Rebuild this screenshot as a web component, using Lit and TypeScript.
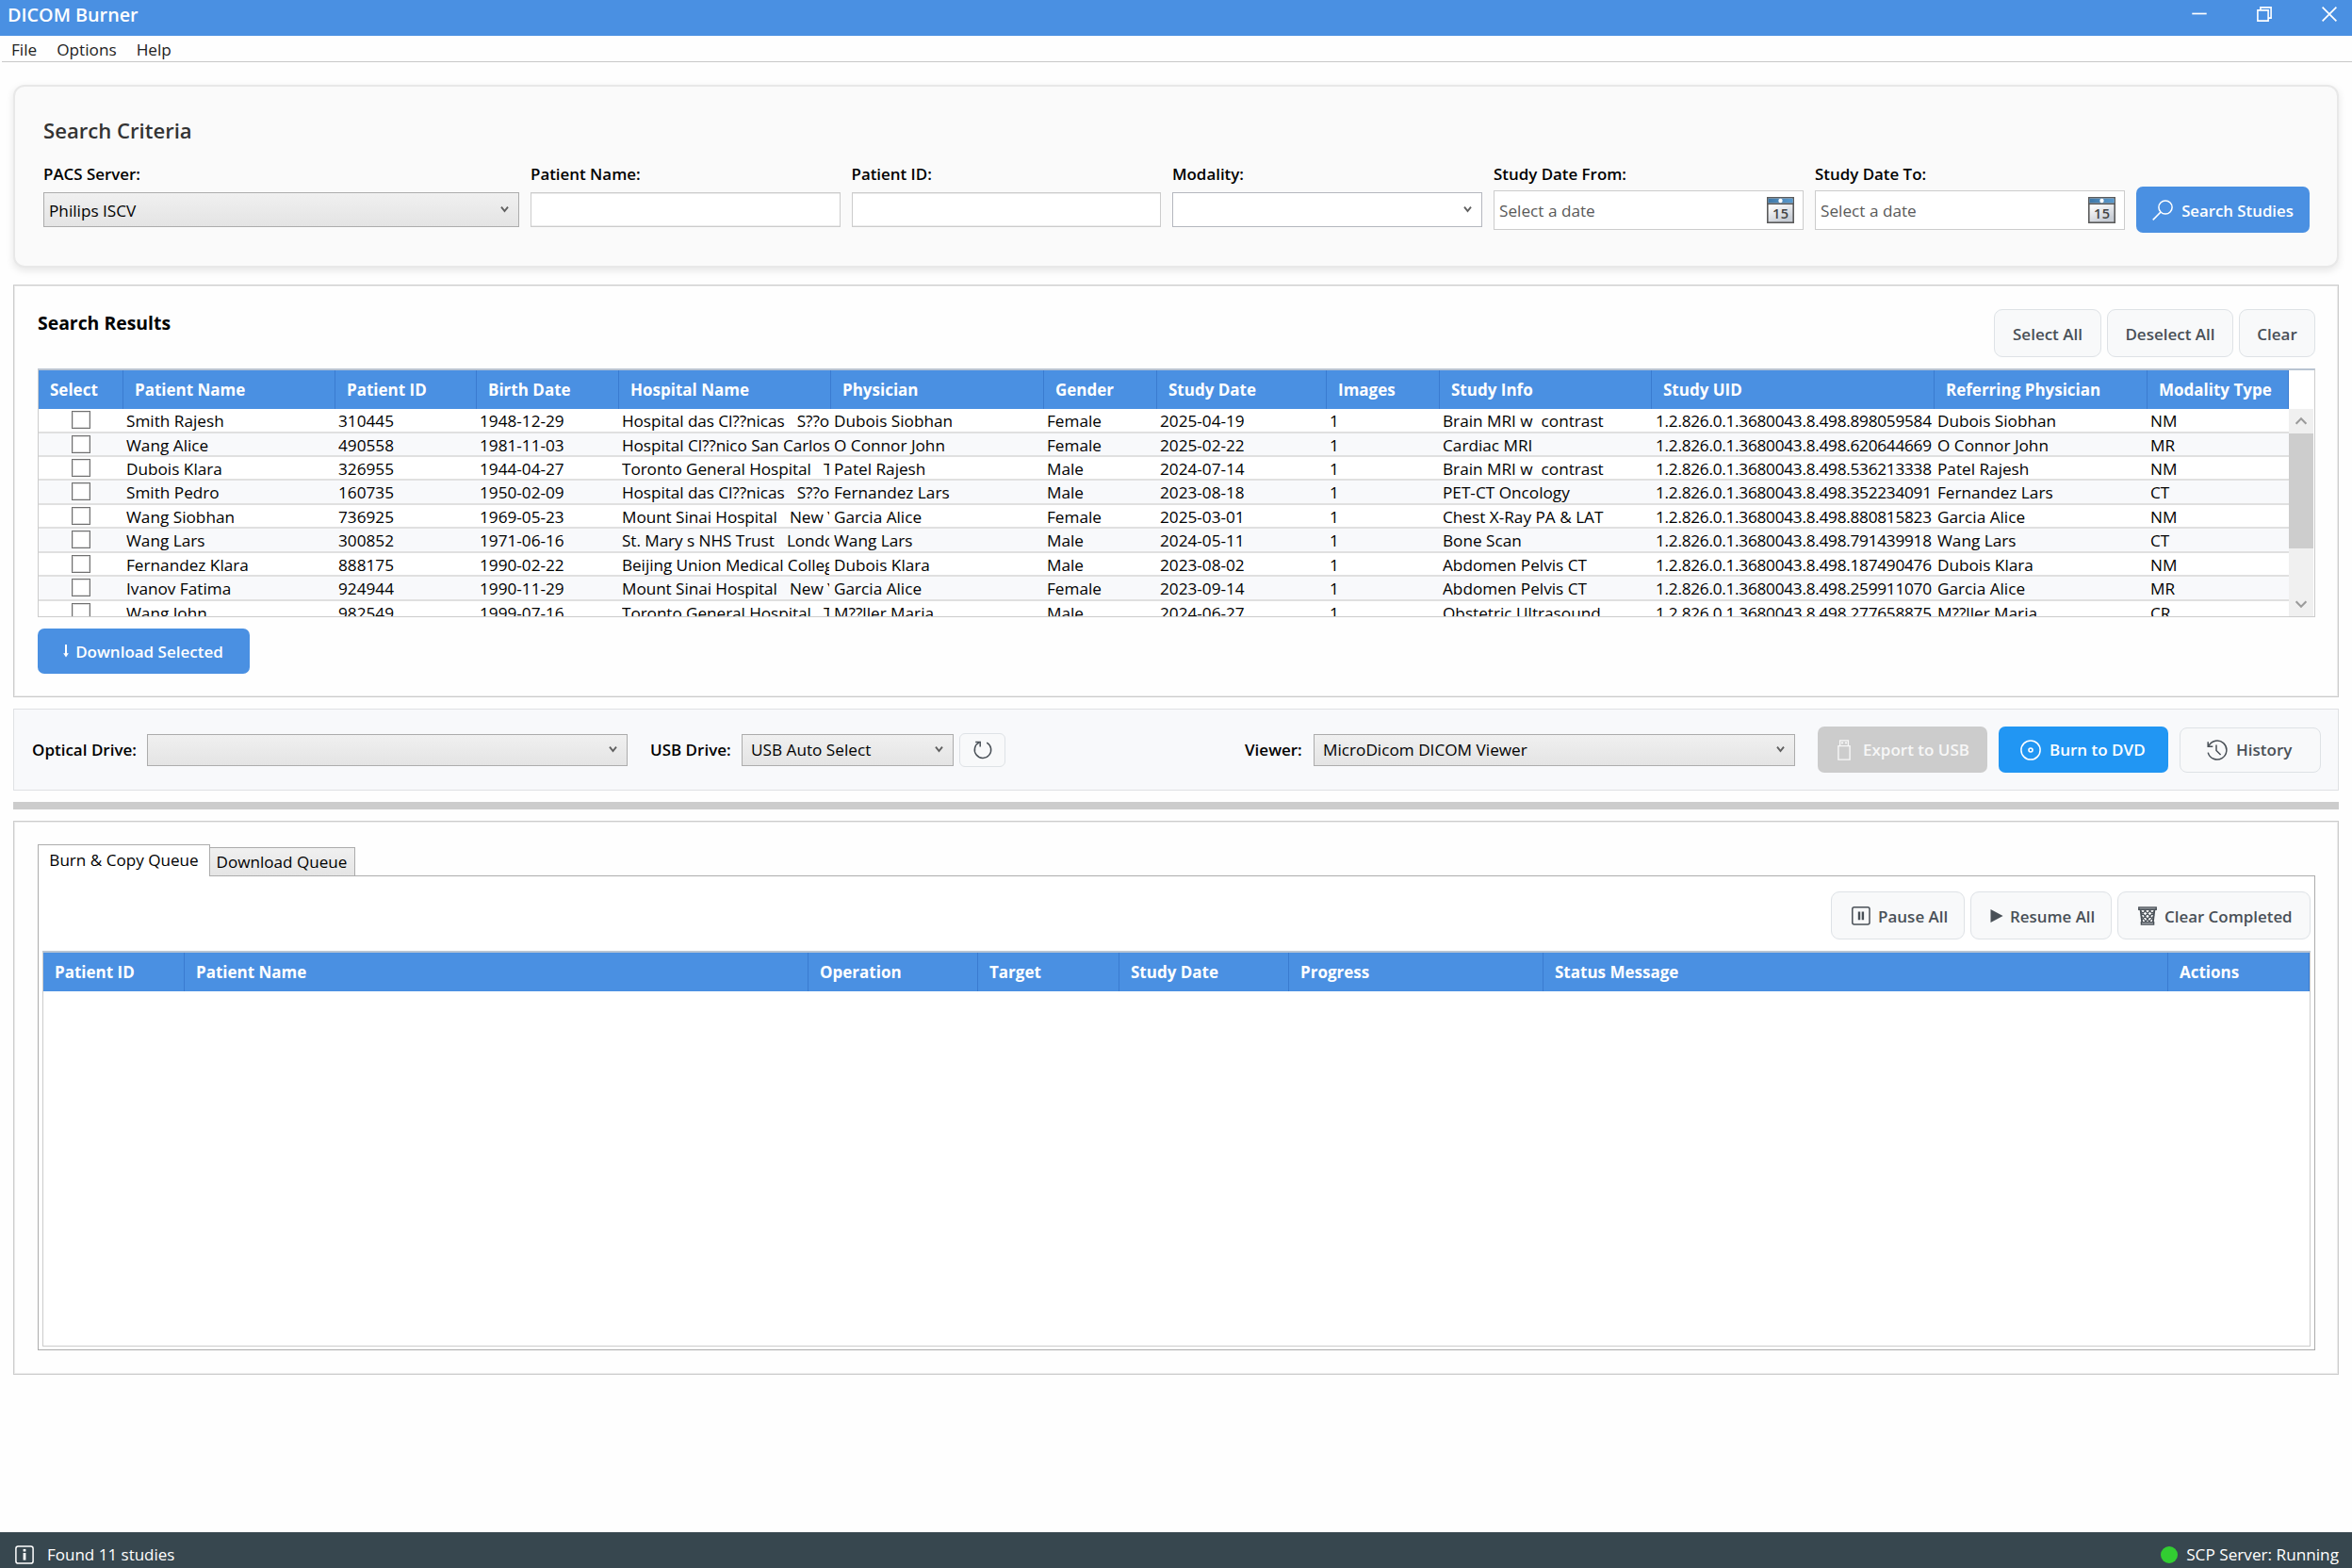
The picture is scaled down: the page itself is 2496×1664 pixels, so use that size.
import { LitElement, html, css, svg } from "lit";
import { customElement, property } from "lit/decorators.js";

interface Study {
  name: string; id: string; birth: string; hospital: string; physician: string; gender: string;
  date: string; images: string; info: string; uid: string; modality: string;
}

const study = (
  name: string, id: string, birth: string, hospital: string, physician: string, gender: string,
  date: string, info: string, uid: string, modality: string,
): Study => ({ name, id, birth, hospital, physician, gender, date, images: "1", info, uid: "1.2.826.0.1.3680043.8.498." + uid, modality });

const STUDIES: Study[] = [
  study("Smith Rajesh", "310445", "1948-12-29", "Hospital das Cl??nicas   S??o Paulo", "Dubois Siobhan", "Female", "2025-04-19", "Brain MRI w  contrast", "8980595842", "NM"),
  study("Wang Alice", "490558", "1981-11-03", "Hospital Cl??nico San Carlos", "O Connor John", "Female", "2025-02-22", "Cardiac MRI", "6206446690", "MR"),
  study("Dubois Klara", "326955", "1944-04-27", "Toronto General Hospital   Toronto", "Patel Rajesh", "Male", "2024-07-14", "Brain MRI w  contrast", "5362133389", "NM"),
  study("Smith Pedro", "160735", "1950-02-09", "Hospital das Cl??nicas   S??o Paulo", "Fernandez Lars", "Male", "2023-08-18", "PET-CT Oncology", "3522340919", "CT"),
  study("Wang Siobhan", "736925", "1969-05-23", "Mount Sinai Hospital   New York", "Garcia Alice", "Female", "2025-03-01", "Chest X-Ray PA & LAT", "8808158230", "NM"),
  study("Wang Lars", "300852", "1971-06-16", "St. Mary s NHS Trust   London", "Wang Lars", "Male", "2024-05-11", "Bone Scan", "7914399182", "CT"),
  study("Fernandez Klara", "888175", "1990-02-22", "Beijing Union Medical College", "Dubois Klara", "Male", "2023-08-02", "Abdomen Pelvis CT", "1874904767", "NM"),
  study("Ivanov Fatima", "924944", "1990-11-29", "Mount Sinai Hospital   New York", "Garcia Alice", "Female", "2023-09-14", "Abdomen Pelvis CT", "2599110704", "MR"),
  study("Wang John", "982549", "1999-07-16", "Toronto General Hospital   Toronto", "M??ller Maria", "Male", "2024-06-27", "Obstetric Ultrasound", "2776588752", "CR"),
];

const RESULT_COLUMNS = [
  "Select", "Patient Name", "Patient ID", "Birth Date", "Hospital Name", "Physician", "Gender",
  "Study Date", "Images", "Study Info", "Study UID", "Referring Physician", "Modality Type",
];
const QUEUE_COLUMNS = ["Patient ID", "Patient Name", "Operation", "Target", "Study Date", "Progress", "Status Message", "Actions"];

const FONT = css`
  * { box-sizing: border-box; }
  :host { font-family: "Open Sans", "Noto Sans", sans-serif; font-size: 17.2px; color: #000; }
  svg { display: block; flex: none; fill: none; stroke: currentColor; }
`;

const icon = (w: number, h: number, body: unknown) =>
  html`<svg width=${w} height=${h} viewBox="0 0 ${w} ${h}">${body}</svg>`;

const ICONS = {
  minimize: icon(16, 16, svg`<path d="M0.3 7.5H15.7" stroke-width="1.7"/>`),
  restore: icon(16, 16, svg`<path d="M0.9 3.9H12.1V15.1H0.9Z M3.9 3.6V0.9H15.1V12.1H12.4" stroke-width="1.6"/>`),
  close: icon(16, 16, svg`<path d="M0.6 0.6L15.4 15.4M15.4 0.6L0.6 15.4" stroke-width="1.7"/>`),
  search: icon(22, 22, svg`<circle cx="14" cy="8" r="7.1" stroke-width="1.5"/><path d="M8.9 13.1L0.7 21.4" stroke-width="1.5"/>`),
  down: icon(6, 14, svg`<path d="M3 0V11" stroke-width="2"/><path d="M0.2 9.2H5.8L3 13.6Z" fill="currentColor" stroke="none"/>`),
  refresh: icon(22, 22, svg`<path d="M15.2 3.1A8.7 8.7 0 1 1 7.2 2.9" stroke-width="1.5"/><path d="M3.2 2.5H8.2V7.5" stroke-width="1.5"/>`),
  usb: icon(14, 22, svg`<path d="M0.9 6.6H13.1V21.1H0.9Z" stroke-width="1.4"/><path d="M2.6 6V0.8H11.4V6" stroke-width="1.3"/><path d="M4 3.4H6.1M7.9 3.4H10" stroke-width="1.7"/>`),
  disc: icon(22, 22, svg`<circle cx="11" cy="11" r="10.1" stroke-width="1.5"/><circle cx="11" cy="11" r="2" stroke-width="1.6"/>`),
  history: icon(22, 22, svg`<path d="M1.9 6.6A10 10 0 1 1 1.2 13.6" stroke-width="1.5"/><path d="M1.2 2.2V7.3H6.3" stroke-width="1.5"/><path d="M10 5.6V11.5L14.6 16" stroke-width="1.5"/>`),
  pause: icon(20, 20, svg`<rect x="0.8" y="0.8" width="18.2" height="18.2" rx="2" stroke-width="1.5"/><path d="M8 5.6V14.3M11.9 5.6V14.3" stroke-width="2.4"/>`),
  play: icon(14, 14, svg`<path d="M0.5 0L13.6 7L0.5 14Z" fill="currentColor" stroke="none"/>`),
  trash: icon(20, 20, svg`<path d="M0.8 0.9H19.2V3.3H0.8Z" stroke-width="1.4" fill="#a9adb2"/><path d="M2.6 3.6L4.2 16.6M17.4 3.6L15.8 16.6" stroke-width="1.8"/><path d="M3.2 5.2L12.5 16.5M6.5 3.6L16 14.2M11.5 3.6L17 9.6M3.8 10.5L8.6 16.5M16.8 5.2L7.5 16.5M13.5 3.6L4 14.2M8.5 3.6L3 9.6M16.2 10.5L11.4 16.5" stroke-width="1.2"/><path d="M3.4 16.6H16.6V19.1H3.4Z" stroke-width="1.4" fill="#a9adb2"/>`),
  info: icon(20, 20, svg`<rect x="0.9" y="0.9" width="18.2" height="18.2" rx="2.4" stroke-width="1.5"/><path d="M10 8V15.6" stroke-width="2.8"/><path d="M10 3.9V6.5" stroke-width="2.8"/>`),
  chevron: icon(9, 8, svg`<path d="M1 0.6L4.5 5L8 0.6" stroke-width="1.9"/>`),
  scrollUp: icon(14, 10, svg`<path d="M1.6 7.8L7 2.2L12.4 7.8" stroke-width="2"/>`),
  scrollDown: icon(14, 10, svg`<path d="M1.6 2.2L7 7.8L12.4 2.2" stroke-width="2"/>`),
  calendar: html`<svg width="29" height="28" viewBox="0 0 29 28">
    <defs>
      <linearGradient id="sky" x1="0" x2="1" y1="0" y2="0"><stop offset="0" stop-color="#3f78a8"/><stop offset="1" stop-color="#5a9bd0"/></linearGradient>
      <linearGradient id="page" x1="0" x2="0.4" y1="0" y2="1"><stop offset="0.3" stop-color="#fff"/><stop offset="1" stop-color="#c9ced6"/></linearGradient>
    </defs>
    <rect x="0.8" y="0.8" width="27.4" height="26.4" fill="url(#page)" stroke="#5b5b5b" stroke-width="1.6"/>
    <rect x="1.4" y="1.6" width="26.2" height="5" fill="url(#sky)" stroke="none"/>
    <path d="M0.5 7.3H28.5" stroke="#555" stroke-width="1.5"/>
    <circle cx="14.5" cy="4" r="2.2" fill="#fff" stroke="none"/>
    <text class="day" x="14.8" y="22.8">15</text>
  </svg>`,
};

@customElement("combo-box")
class ComboBox extends LitElement {
  @property() value = "";
  @property({ type: Boolean, reflect: true }) editable = false;
  static styles = [FONT, css`
    :host { display: flex; align-items: center; justify-content: space-between; box-sizing: border-box;
      height: 34px; flex: none; padding: 0 10px 0 9px; border: 1px solid #acacac;
      background: linear-gradient(#f0f0f0, #e4e4e4); }
    :host([editable]) { background: #fff; border-color: #b4b7be; }
    svg { color: #606060; }
  `];
  render() { return html`<span>${this.value}</span>${ICONS.chevron}`; }
}

@customElement("data-header")
class DataHeader extends LitElement {
  @property({ attribute: false }) columns: string[] = [];
  static styles = [FONT, css`
    :host { display: grid; height: 41px; background: #4a90e2; }
    .cell { display: flex; align-items: center; padding-left: 12px; color: #fff; font-weight: 700; font-size: 17px;
      white-space: nowrap; border-right: 1px solid #3a7bd0; }
  `];
  render() { return this.columns.map((c) => html`<div class="cell">${c}</div>`); }
}

@customElement("app-root")
class AppRoot extends LitElement {
  static styles = [FONT, css`
    :host { display: flex; flex-direction: column; width: 2496px; height: 1664px; background: #fefefe; overflow: hidden; }

    .titlebar { display: flex; justify-content: space-between; height: 38px; padding: 0 16px 0 8px; background: #4a90e2; color: #fff; flex: none; }
    .title { line-height: 31px; font-size: 19.8px; font-weight: 600; }
    .window-buttons { display: flex; align-items: center; height: 29px; gap: 53px; }
    .menubar { display: flex; gap: 21px; height: 28px; margin-left: 2px; padding-left: 10px; line-height: 29px; border-bottom: 1px solid #c8c8c8; color: #212121; flex: none; }

    .content { flex: 1; display: flex; flex-direction: column; padding: 24px 14px 0; }
    .label { font-weight: 600; font-size: 17px; white-space: nowrap; }

    .criteria { height: 194px; margin-bottom: 18px; padding: 32px 29px 0 30px; border: 2px solid #e8e8e8; border-radius: 12px; background: #fafafa;
      box-shadow: 0 3px 9px rgba(0, 0, 0, 0.1); flex: none; }
    .criteria-title { line-height: 28px; margin-bottom: 21px; font-size: 22.1px; font-weight: 600; color: #333; }
    .fields { display: grid; grid-template-columns: 505px 328.5px 328.5px 329px 329px 329px 184px; column-gap: 12px; }
    .field .label { line-height: 24px; margin-bottom: 1px; font-size: 16.9px; }
    .slot { display: flex; align-items: center; height: 49px; }
    .slot combo-box { flex: 1; height: 37px; padding-left: 5px; padding-top: 1px; }
    .input { flex: 1; height: 37px; border: 1px solid #ccc; background: #fff; box-shadow: inset 0 1px #ececec, inset 0 -1px #ececec; }
    .date { flex: 1; display: flex; align-items: center; justify-content: space-between; height: 42px; padding: 1px 9px 0 5px;
      border: 1px solid #ccc; background: #fff; color: #595959; }
    .day { font: 600 14.5px "Open Sans", sans-serif; fill: #444; stroke: none; text-anchor: middle; letter-spacing: 0.6px; }

    .button { display: flex; align-items: center; justify-content: center; flex: none; border-radius: 8px; font-weight: 600; font-size: 17px; white-space: nowrap; }
    .primary { background: #4a90e2; color: #fff; border-radius: 7px; }
    .plain { background: #f8f9fa; color: #495057; border: 1px solid #dee2e6; border-radius: 9px; }
    .search { align-self: end; height: 49px; gap: 9px; font-size: 16.8px; padding-top: 1px; }

    .panel { border: 1px solid #ccc; background: #fefefe; box-shadow: inset 0 0 0 1px #ececec; flex: none; }
    .results { height: 438px; margin-bottom: 12px; padding: 25px 24px 0 25px; }
    .results-head { display: flex; justify-content: space-between; height: 51px; margin-bottom: 12px; }
    .results-title { line-height: 29px; font-size: 19.4px; font-weight: 700; }
    .group { display: flex; gap: 6px; }
    .group .button { height: 51px; padding-top: 1px; }
    .w114 { width: 114px; }
    .w134 { width: 134px; }
    .w81 { width: 81px; }

    .grid { border: 1px solid #ccc; border-top: 2px solid #b9c4d2; background: #fff; }
    .grid-results { height: 264px; overflow: hidden; }
    .cols { display: grid; width: 2388px; grid-template-columns: 90px 225px 150px 151px 225px 226px 120px 180px 120px 225px 300px 226px 150px; }
    .grid-body { display: flex; height: 220px; }
    .rows { width: 2388px; overflow: hidden; }
    .row { height: 25px; border-bottom: 2px solid #e0e0e0; }
    .row:nth-child(1), .row:nth-child(4), .row:nth-child(6), .row:nth-child(8) { height: 26px; }
    .row:nth-child(even) { background: #f8f9fb; }
    .cell { line-height: 25px; height: 24px; margin: 0 3px; overflow: hidden; white-space: pre; }
    .hospital { letter-spacing: -0.07px; margin-right: 2px; }
    .uid { letter-spacing: -0.25px; margin-left: 4px; }
    .check { width: 20px; height: 19px; margin: 2px auto 0; border: 1px solid #707070; background: #fff; box-shadow: inset 0 0 0 1px #dcdcdc; }
    .scrollbar { display: flex; flex-direction: column; align-items: center; width: 26px; background: #f0f0f0; color: #9b9b9b; }
    .arrow { display: flex; align-items: center; justify-content: center; height: 26px; }
    .thumb { width: 26px; height: 122px; background: #cdcdcd; }
    .track { flex: 1; }
    .download { width: 225px; height: 48px; margin-top: 12px; gap: 7px; padding-right: 1px; }

    .toolbar { display: flex; align-items: center; height: 87px; margin-bottom: 12px; padding: 0 18px 0 19px; border: 1px solid #dfe1e4; background: #f8f9fb; flex: none; }
    .optical-label { width: 122px; }
    .optical { width: 510px; margin-right: 24px; }
    .usb-label { width: 97px; }
    .usb { width: 225px; margin-right: 6px; }
    .refresh { width: 49px; height: 36px; border-radius: 6px; }
    .spacer { flex: 1; }
    .viewer-label { width: 73px; }
    .viewer { width: 511px; margin-right: 24px; }
    .action { height: 49px; margin-right: 12px; justify-content: flex-start; border-radius: 7px; }
    .export { width: 180px; padding-left: 21px; gap: 13px; background: #ccc; color: #f7f7f7; }
    .burn { width: 180px; padding-left: 23px; gap: 9px; background: #2196f3; color: #fff; }
    .history { width: 150px; height: 48px; margin-right: 0; padding-left: 28px; gap: 9px; border-radius: 8px; }

    .splitter { height: 8px; margin-bottom: 12px; background: #ccc; flex: none; }

    .queue { height: 588px; padding: 24px 24px 0 25px; }
    .tabs { display: flex; align-items: flex-end; height: 33px; }
    .tab { display: flex; align-items: center; justify-content: center; border: 1px solid #acacac; white-space: nowrap; font-size: 17.1px; }
    .tab-active { position: relative; width: 183px; height: 34px; margin-bottom: -1px; padding-bottom: 2px; border-bottom: none; background: #fff; }
    .tab-idle { width: 154px; height: 30px; padding-right: 1px; border-left: none; border-bottom: none; background: linear-gradient(#f0f0f0, #e5e5e5); }
    .tab-body { height: 504px; padding: 16px 4px 0; border: 1px solid #acacac; background: #fff; }
    .queue-tools { display: flex; justify-content: flex-end; margin-bottom: 12px; }
    .queue-tools .button { justify-content: flex-start; }
    .pause { width: 142px; padding-left: 21px; gap: 8px; }
    .resume { width: 150px; padding-left: 20px; gap: 7px; font-size: 16.9px; }
    .clear { width: 205px; padding-left: 21px; gap: 8px; font-size: 16.9px; }
    .grid-queue { height: 420px; }
    .queue-cols { grid-template-columns: 150px 662px 180px 150px 180px 270px 663px 1fr; }

    .status { display: flex; align-items: center; height: 38px; padding: 9px 14px 0 16px; background: #37474f; color: #fff; line-height: 30px; flex: none; }
    .status-text { margin-left: 14px; font-size: 17px; }
    .dot { width: 18px; height: 18px; margin-right: 9px; border-radius: 50%; background: #32cd32; }
  `];

  private field(label: string, control: unknown) {
    return html`<div class="field"><div class="label">${label}</div><div class="slot">${control}</div></div>`;
  }

  private row(s: Study) {
    const cell = (v: string) => html`<div class="cell">${v}</div>`;
    return html`<div class="row cols">
      <div class="check"></div>
      ${[s.name, s.id, s.birth].map(cell)}
      <div class="cell hospital">${s.hospital}</div>
      ${[s.physician, s.gender, s.date, s.images, s.info].map(cell)}
      <div class="cell uid">${s.uid}</div>
      ${cell(s.physician)}${cell(s.modality)}
    </div>`;
  }

  render() {
    const date = html`<div class="date"><span>Select a date</span>${ICONS.calendar}</div>`;
    return html`
      <div class="titlebar">
        <div class="title">DICOM Burner</div>
        <div class="window-buttons">${ICONS.minimize}${ICONS.restore}${ICONS.close}</div>
      </div>
      <div class="menubar"><span>File</span><span>Options</span><span>Help</span></div>

      <div class="content">
        <section class="criteria">
          <div class="criteria-title">Search Criteria</div>
          <div class="fields">
            ${this.field("PACS Server:", html`<combo-box value="Philips ISCV"></combo-box>`)}
            ${this.field("Patient Name:", html`<div class="input"></div>`)}
            ${this.field("Patient ID:", html`<div class="input"></div>`)}
            ${this.field("Modality:", html`<combo-box editable></combo-box>`)}
            ${this.field("Study Date From:", date)}
            ${this.field("Study Date To:", date)}
            <div class="button primary search">${ICONS.search}<span>Search Studies</span></div>
          </div>
        </section>

        <section class="panel results">
          <div class="results-head">
            <div class="results-title">Search Results</div>
            <div class="group">
              <div class="button plain w114">Select All</div>
              <div class="button plain w134">Deselect All</div>
              <div class="button plain w81">Clear</div>
            </div>
          </div>
          <div class="grid grid-results">
            <data-header class="cols" .columns=${RESULT_COLUMNS}></data-header>
            <div class="grid-body">
              <div class="rows">${STUDIES.map((s) => this.row(s))}</div>
              <div class="scrollbar">
                <div class="arrow">${ICONS.scrollUp}</div>
                <div class="thumb"></div>
                <div class="track"></div>
                <div class="arrow">${ICONS.scrollDown}</div>
              </div>
            </div>
          </div>
          <div class="button primary download">${ICONS.down}<span>Download Selected</span></div>
        </section>

        <section class="toolbar">
          <div class="label optical-label">Optical Drive:</div>
          <combo-box class="optical"></combo-box>
          <div class="label usb-label">USB Drive:</div>
          <combo-box class="usb" value="USB Auto Select"></combo-box>
          <div class="button plain refresh">${ICONS.refresh}</div>
          <div class="spacer"></div>
          <div class="label viewer-label">Viewer:</div>
          <combo-box class="viewer" value="MicroDicom DICOM Viewer"></combo-box>
          <div class="button action export">${ICONS.usb}<span>Export to USB</span></div>
          <div class="button action burn">${ICONS.disc}<span>Burn to DVD</span></div>
          <div class="button plain action history">${ICONS.history}<span>History</span></div>
        </section>

        <div class="splitter"></div>

        <section class="panel queue">
          <div class="tabs">
            <div class="tab tab-active">Burn &amp; Copy Queue</div>
            <div class="tab tab-idle">Download Queue</div>
          </div>
          <div class="tab-body">
            <div class="group queue-tools">
              <div class="button plain pause">${ICONS.pause}<span>Pause All</span></div>
              <div class="button plain resume">${ICONS.play}<span>Resume All</span></div>
              <div class="button plain clear">${ICONS.trash}<span>Clear Completed</span></div>
            </div>
            <div class="grid grid-queue">
              <data-header class="queue-cols" .columns=${QUEUE_COLUMNS}></data-header>
            </div>
          </div>
        </section>
      </div>

      <div class="status">
        ${ICONS.info}<span class="status-text">Found 11 studies</span>
        <div class="spacer"></div>
        <div class="dot"></div><span>SCP Server: Running</span>
      </div>
    `;
  }
}
